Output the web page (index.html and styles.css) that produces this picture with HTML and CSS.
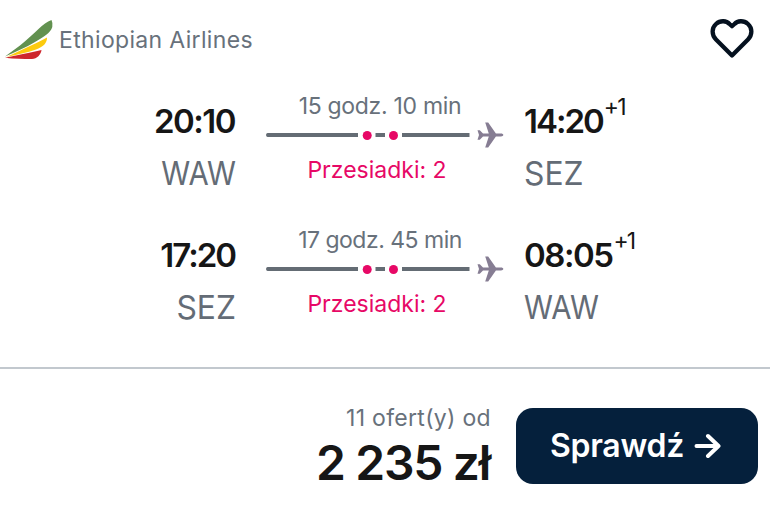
FILE: index.html
```html
<!DOCTYPE html>
<html lang="pl">
<head>
<meta charset="utf-8">
<title>Ethiopian Airlines</title>
<link rel="stylesheet" href="styles.css">
</head>
<body>
<svg class="defs" width="0" height="0" aria-hidden="true">
  <symbol id="route" viewBox="0 0 240 28">
    <path d="M2.500 14H93M110.500 14h9.500M137 14H204.500" fill="none" stroke="#646c74" stroke-width="4"/>
    <circle cx="3" cy="14" r="2" fill="#646c74"/>
    <circle cx="102.200" cy="14.500" r="4.500" fill="#e70866"/>
    <circle cx="128.500" cy="14.500" r="4.500" fill="#e70866"/>
    <path d="M212.500 9.200h2.300l3.200 3.400h5.800L220.200 1.500h3l7.700 11.100h5.100c1.300 0 2.300.6 2.300 1.400s-1 1.400-2.300 1.400h-5.100l-7.700 11.100h-3l3.600-11.100H218l-3.200 3.400h-2.300l1.500-4.800z" fill="#867d93"/>
  </symbol>
</svg>
<article class="card">
  <header class="top">
    <div class="airline">
      <svg width="48" height="42" viewBox="0 0 48 42">
        <path d="M0 37.500L15 26.500C22 21 28 15 33.500 10C38 5.500 42 2.500 46.500 1Q48 4 47.300 8C45.500 14 38 18.500 30 23C20 29 10 33 0 37.500Z" fill="#629150"/>
        <path d="M2 37.700L26 26.500C32 23.500 37 21.500 42 18.500C42.300 24 38 28 31 30.500C22 33.500 12 36 2 37.700Z" fill="#fccb0e"/>
        <path d="M0 38.800L18 35C25 33.500 31 32.500 36.500 31C36 35.500 32 40 27 40C18 40 9 40 0 38.800Z" fill="#ce272d"/>
      </svg>
      <span class="name">Ethiopian Airlines</span>
    </div>
    <svg class="heart" width="46" height="42" viewBox="0 0 46 42">
      <path d="M23 37.500L7 21.500C2.500 17 2.500 10 7 6C11.500 2 17.500 2.700 20.500 6L23 8.200L25.500 6C28.500 2.700 34.500 2 39 6C43.500 10 43.500 17 39 21.500Z" fill="none" stroke="#05111f" stroke-width="4.300" stroke-linejoin="round"/>
    </svg>
  </header>
  <main class="legs">
    <section class="leg">
      <div class="from"><div class="time">20:10</div><div class="code waw">WAW</div></div>
      <div class="mid"><div class="duration">15 godz. 10 min</div><svg class="route" width="240" height="28"><use href="#route"/></svg><div class="stops">Przesiadki: 2</div></div>
      <div class="to"><div class="time tight">14:20<sup>+1</sup></div><div class="code sez">SEZ</div></div>
    </section>
    <section class="leg">
      <div class="from"><div class="time tight">17:20</div><div class="code sez">SEZ</div></div>
      <div class="mid"><div class="duration snug">17 godz. 45 min</div><svg class="route" width="240" height="28"><use href="#route"/></svg><div class="stops">Przesiadki: 2</div></div>
      <div class="to"><div class="time">08:05<sup>+1</sup></div><div class="code waw">WAW</div></div>
    </section>
  </main>
  <footer class="bottom">
    <div class="offer"><div class="count">11 ofert(y) od</div><div class="price">2 235 zł</div></div>
    <button class="cta"><span>Sprawdź</span>
      <svg width="28" height="28" viewBox="0 0 28 28"><path d="M3.500 14H25.500M15 4L25.500 14L15 24" fill="none" stroke="#fff" stroke-width="4" stroke-linecap="round" stroke-linejoin="round"/></svg>
    </button>
  </footer>
</article>
</body>
</html>
```
FILE: styles.css
```css
* { box-sizing: border-box; }
body { margin: 0; background: #fff; font-family: Inter, "Liberation Sans", sans-serif; color: #161616; }
.defs { display: block; }
.card { width: 770px; height: 511px; overflow: hidden; }
.top { display: flex; justify-content: space-between; height: 95px; padding: 18px 15px 0 5px; }
.airline { display: flex; gap: 6px; height: 44px; }
.airline svg { margin-top: 1px; }
.name { font-size: 23px; line-height: 44px; letter-spacing: 0.34px; color: #68717b; white-space: nowrap; }
.legs { display: grid; gap: 30px; height: 272px; align-content: start; }
.leg { display: grid; grid-template-columns: 236px 269px 1fr; height: 104px; white-space: nowrap; }
.from { text-align: right; }
.mid { margin-left: 29px; width: 240px; text-align: center; }
.to { padding-left: 19px; }
.time { height: 52px; line-height: 52px; font-size: 33px; font-weight: 600; letter-spacing: -1.5px; }
.time.tight { letter-spacing: -2px; }
.from .time { margin-right: 1px; }
.time sup { margin-left: 1px; font-size: 23px; font-weight: 400; line-height: 0; letter-spacing: -1.8px; vertical-align: 18px; }
.code { height: 52px; line-height: 52px; font-size: 33px; color: #646c76; transform-origin: left; }
.from .code { transform-origin: right; }
.waw { transform: scaleX(0.89); }
.sez { transform: scaleX(0.965); }
.duration { font-size: 23px; line-height: 26px; letter-spacing: -0.3px; margin: -2px 10px 0 0; color: #68717b; }
.duration.snug { letter-spacing: -0.5px; }
.route { display: block; margin-top: 2px; }
.stops { font-size: 23px; line-height: 40px; margin: 1px 16px 0 0; color: #e70866; }
.bottom { display: flex; justify-content: flex-end; gap: 25px; height: 144px; padding: 40px 12px 0 0; border-top: 2px solid #c2c8ce; }
.offer { text-align: right; white-space: nowrap; }
.count { font-size: 23px; line-height: 18px; letter-spacing: 0.3px; color: #68717b; }
.price { font-size: 48px; line-height: 60px; font-weight: 600; letter-spacing: -1.3px; margin: 6px 1px 0 0; }
.cta { display: flex; align-items: center; justify-content: center; gap: 9px; width: 242px; height: 76px; margin-top: -1px; padding: 0 3px 0 0; border: 0; border-radius: 17px; background: #05203c; color: #fff; font: 600 32px/40px Inter, sans-serif; letter-spacing: -0.3px; }
```
